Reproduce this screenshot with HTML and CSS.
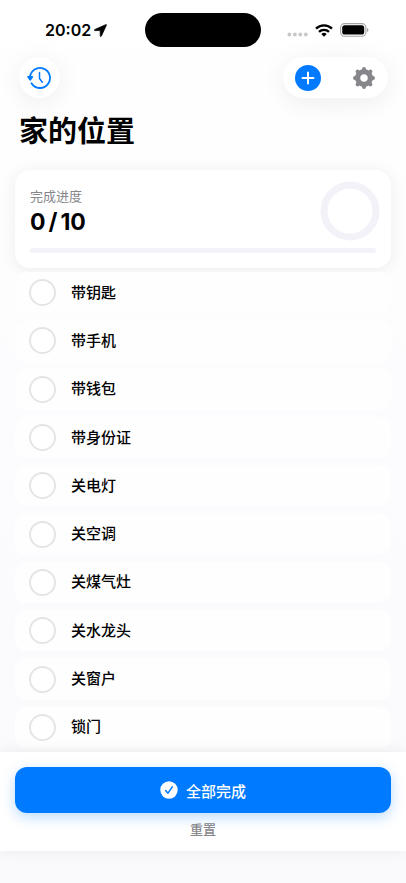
FILE: index.html
```html
<!DOCTYPE html>
<html lang="zh-CN">
<head>
<meta charset="utf-8">
<meta name="viewport" content="width=device-width, initial-scale=1">
<title>家的位置</title>
<link rel="stylesheet" href="styles.css">
</head>
<body>
<div class="app">
  <div class="status">
    <div class="status-left">
      <span class="time">20:02</span>
      <svg width="13" height="13" viewBox="0 0 14 14" aria-hidden="true"><path stroke="#000" stroke-width=".8" stroke-linejoin="round" d="M12.600.7.9 5.900c-.8.4-.6 1.200.2 1.200h5.300c.2 0 .3.1.3.3v5.300c0 .9.900 1 1.300.2L13.300 1.400c.3-.6-.1-1-.7-.7z"/></svg>
    </div>
    <div class="island"></div>
    <div class="status-right">
      <svg class="dots" width="21" height="14" viewBox="0 0 21 14" fill="#c8c8c8" aria-hidden="true"><circle cx="2.400" cy="11.500" r="1.900"/><circle cx="7.900" cy="11.500" r="1.900"/><circle cx="13.300" cy="11.500" r="1.900"/><circle cx="18.800" cy="11.500" r="1.900"/></svg>
      <svg width="18" height="13" viewBox="0 0 18 13" fill="none" stroke="#000" stroke-width="2.300" aria-hidden="true"><path d="M1 4.600a11.500 11.500 0 0 1 16 0M4 7.900a7.200 7.200 0 0 1 10 0"/><path d="M9 12.800 6.300 10.100a3.900 3.900 0 0 1 5.400 0z" fill="#000" stroke="none"/></svg>
      <svg width="29" height="14" viewBox="0 0 29 14" aria-hidden="true"><rect x=".6" y=".6" width="25.300" height="12.600" rx="4" fill="none" stroke="#a4a4a4" stroke-width="1.100"/><rect x="2.200" y="2.200" width="22" height="9.400" rx="2.600"/><path d="M27 4.900c1.900.7 1.900 3.300 0 4z" fill="#a4a4a4"/></svg>
    </div>
  </div>

  <header class="toolbar">
    <button class="round" type="button" aria-label="历史记录">
      <svg width="26" height="24" viewBox="0 0 26 24" fill="none" stroke="#007aff" stroke-width="1.800" stroke-linecap="round" stroke-linejoin="round" aria-hidden="true"><path d="M3 11.500a10 10 0 1 1 1.500 5.800"/><path d="M12.500 6.500v6l2.800 3.700" stroke-width="1.500"/><path d="M.9 10.800h4.600L3.200 14z" fill="#007aff" stroke-width="1.400"/></svg>
    </button>
    <div class="pill">
      <button type="button" aria-label="添加">
        <svg width="26" height="26" viewBox="0 0 26 26" aria-hidden="true"><circle cx="13" cy="13" r="13" fill="#007aff"/><path d="M13 7.500v11M7.500 13h11" stroke="#fff" stroke-width="2" stroke-linecap="round"/></svg>
      </button>
      <button type="button" aria-label="设置">
        <svg width="24" height="24" viewBox="-12 -12 24 24" aria-hidden="true"><g fill="none" stroke="#86868b"><circle r="6.400" stroke-width="5.200"/><g stroke-width="4" stroke-linecap="round"><path d="M0-9V-7M0 9V7M-9 0H-7M9 0H7M-6.400-6.400-5-5M6.400 6.400 5 5M-6.400 6.400-5 5M6.400-6.400 5-5"/></g></g></svg>
      </button>
    </div>
  </header>

  <h1>家的位置</h1>

  <main>
    <section class="card">
      <div class="summary">
        <div>
          <p class="caption">完成进度</p>
          <p class="count"><span>0</span><span>/</span><span>10</span></p>
        </div>
        <svg class="ring" width="52" height="52" viewBox="0 0 52 52" aria-hidden="true"><circle cx="26" cy="26" r="26" fill="none" stroke="#f2f2f8" stroke-width="7"/></svg>
      </div>
      <div class="track" role="progressbar" aria-label="完成进度" aria-valuemin="0" aria-valuemax="10" aria-valuenow="0"></div>
    </section>

    <ul class="list">
      <li><label><input type="checkbox">带钥匙</label></li>
      <li><label><input type="checkbox">带手机</label></li>
      <li><label><input type="checkbox">带钱包</label></li>
      <li><label><input type="checkbox">带身份证</label></li>
      <li><label><input type="checkbox">关电灯</label></li>
      <li><label><input type="checkbox">关空调</label></li>
      <li><label><input type="checkbox">关煤气灶</label></li>
      <li><label><input type="checkbox">关水龙头</label></li>
      <li><label><input type="checkbox">关窗户</label></li>
      <li><label><input type="checkbox">锁门</label></li>
    </ul>
  </main>

  <footer class="actions">
    <button class="primary" type="button">
      <svg width="18" height="18" viewBox="0 0 18 18" aria-hidden="true"><circle cx="9" cy="9" r="8.700" fill="#fff"/><path d="m5.600 9.500 2.400 2.700 4.300-6.400" fill="none" stroke="#007aff" stroke-width="1.500" stroke-linecap="round" stroke-linejoin="round"/></svg>
      全部完成
    </button>
    <button class="reset" type="button">重置</button>
  </footer>
</div>
</body>
</html>
```
FILE: styles.css
```css
* {
  box-sizing: border-box;
}

body {
  margin: 0;
  font-family: Inter, "Noto Sans CJK SC", sans-serif;
  font-size: 15px;
  font-weight: 500;
  color: #000;
}

h1, p, ul {
  margin: 0;
  padding: 0;
}

button {
  padding: 0;
  border: 0;
  background: none;
  font: inherit;
  cursor: pointer;
}

svg {
  display: block;
  flex: none;
}

.app {
  display: flex;
  flex-direction: column;
  min-height: 100vh;
  padding-bottom: 32px;
  background: linear-gradient(#fff 0, #fefefe 100px, #fcfcfe 420px, #fafafd 100%);
}

.status {
  display: grid;
  grid-template-columns: 1fr 116px 1fr;
  align-items: center;
  padding: 13px 0 10px;
}

.status-left,
.status-right {
  display: flex;
  align-items: center;
}

.status-left {
  gap: 3px;
  padding-left: 45px;
}

.status-right {
  justify-content: flex-end;
  gap: 7px;
  padding-right: 37px;
}

.time {
  font-size: 16px;
  font-weight: 600;
  line-height: 20px;
}

.island {
  height: 34px;
  border-radius: 17px;
  background: #000;
}

.toolbar {
  display: flex;
  justify-content: space-between;
  padding: 0 18px 0 19px;
}

.round,
.pill {
  display: flex;
  align-items: center;
  height: 41px;
  border-radius: 21px;
  background: #fff;
  box-shadow: 0 4px 26px rgba(0, 0, 0, 0.07);
}

.round {
  justify-content: center;
  width: 41px;
}

.pill {
  gap: 31px;
  padding: 0 12px;
}

h1 {
  padding: 12px 19px 0;
  font-size: 29px;
  font-weight: 700;
  line-height: 44px;
}

main {
  flex: 1;
  display: flex;
  flex-direction: column;
  gap: 4px;
  padding: 16px 15px 4px;
}

.card {
  position: relative;
  padding: 15px;
  border-radius: 15px;
  background: #fff;
  box-shadow: 0 2px 16px rgba(0, 0, 0, 0.07);
}

.summary {
  display: flex;
  justify-content: space-between;
  margin-bottom: 11px;
}

.caption {
  font-size: 13px;
  font-weight: 400;
  line-height: 22px;
  color: #86868b;
}

.count {
  display: flex;
  gap: 3px;
  font-size: 23px;
  font-weight: 700;
  line-height: 30px;
}

.ring {
  overflow: visible;
}

.track {
  height: 5px;
  border-radius: 3px;
  background: #f2f2f8;
}

.list {
  position: relative;
  flex: 1;
  display: flex;
  flex-direction: column;
  gap: 7px;
  list-style: none;
}

.list li {
  flex: 1;
  display: flex;
  border-radius: 12px;
  background: #fefefe;
}

.list label {
  flex: 1;
  display: flex;
  align-items: center;
  gap: 15px;
  padding: 0 14px;
  line-height: 22px;
}

.list input {
  appearance: none;
  width: 27px;
  height: 27px;
  margin: 0;
  border: 2px solid #e5e5e7;
  border-radius: 50%;
  background: #fff;
}

.list input:checked {
  border-color: #007aff;
  background: #007aff;
}

.actions {
  position: relative;
  display: flex;
  flex-direction: column;
  align-items: center;
  gap: 6px;
  padding: 15px 15px 12px;
  background: #fff;
  box-shadow: 0 0 14px rgba(0, 0, 0, 0.07);
}

.primary {
  display: flex;
  align-items: center;
  justify-content: center;
  align-self: stretch;
  gap: 8px;
  height: 46px;
  border-radius: 12px;
  background: #007aff;
  color: #fff;
  box-shadow: 0 4px 14px rgba(0, 122, 255, 0.27);
}

.reset {
  font-size: 13px;
  line-height: 20px;
  color: #86868b;
}
```
